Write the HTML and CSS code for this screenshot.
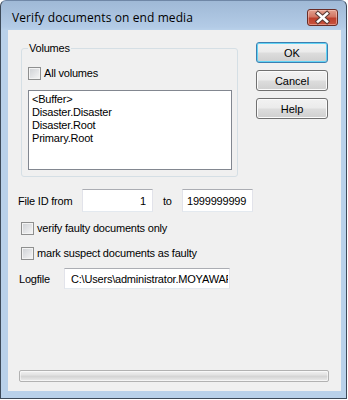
FILE: index.html
```html
<!DOCTYPE html>
<html lang="en">
<head>
  <meta charset="UTF-8" />
  <title>Verify documents on end media</title>
  <link rel="stylesheet" href="styles.css">
</head>
<body>
  <div class="window">
    <div class="titlebar">
      <span class="title">Verify documents on end media</span>
      <span class="close">
        <svg width="31" height="17" viewBox="0 0 31 17">
          <path d="M11 4.5 L20 12.5 M20 4.5 L11 12.5" stroke="#5b3a36" stroke-width="4.6" stroke-linecap="square" />
          <path d="M11 4.5 L20 12.5 M20 4.5 L11 12.5" stroke="#ffffff" stroke-width="2.6" stroke-linecap="square" />
        </svg>
      </span>
    </div>
    <div class="client">
      <div class="top">
        <fieldset class="group">
          <legend>Volumes</legend>
          <label class="check-row"><span class="check"></span>All volumes</label>
          <ul class="listbox">
            <li>&lt;Buffer&gt;</li>
            <li>Disaster.Disaster</li>
            <li>Disaster.Root</li>
            <li>Primary.Root</li>
          </ul>
        </fieldset>
        <div class="buttons">
          <button class="btn default">OK</button>
          <button class="btn">Cancel</button>
          <button class="btn">Help</button>
        </div>
      </div>
      <div class="range-row">
        <span class="lbl-from">File ID from</span>
        <input class="field num" type="text" value="1">
        <span class="lbl-to">to</span>
        <input class="field" type="text" value="1999999999">
      </div>
      <label class="check-row opt first"><span class="check"></span>verify faulty documents only</label>
      <label class="check-row opt"><span class="check"></span>mark suspect documents as faulty</label>
      <div class="log-row">
        <span class="lbl-log">Logfile</span>
        <input class="field log" type="text" value="C:\Users\administrator.MOYAWARE\verify.log">
      </div>
      <div class="progress"></div>
    </div>
  </div>
</body>
</html>
```

FILE: styles.css
```css
:root {
  --frame: #b9d1ea;
  --face: #f0f0f0;
  --ui-font: 'Liberation Sans', Arial, sans-serif;
}
* { box-sizing: border-box; margin: 0; padding: 0; }
body {
  background: #ffffff;
  font-family: var(--ui-font);
  font-size: 11px;
  letter-spacing: -0.2px;
  color: #000;
}
.window {
  width: 347px;
  height: 399px;
  border: 1px solid #3d4a59;
  border-top-color: #6f87a6;
  border-radius: 6px 6px 0 0;
  background: linear-gradient(#9fb9d6 0, #b3cbe6 26px, var(--frame) 29px);
  padding: 0 5px 7px 7px;
  display: flex;
  flex-direction: column;
}
.titlebar {
  height: 29px;
  display: flex;
  align-items: flex-start;
  justify-content: space-between;
  padding-left: 4px;
}
.title {
  font-family: 'Open Sans', 'Noto Sans', sans-serif;
  font-size: 12px;
  letter-spacing: 0.1px;
  line-height: 16px;
  margin-top: 9px;
  color: #000;
}
.close {
  width: 31px;
  height: 17px;
  margin-top: 8px;
  margin-right: 3px;
  border: 1px solid #6a2d26;
  border-radius: 3px;
  background: linear-gradient(#e3a08f 0, #d27563 45%, #bd3f2c 55%, #c9543f 100%);
  box-shadow: inset 0 0 0 1px rgba(255,220,210,0.45);
  display: flex;
  align-items: center;
  justify-content: center;
}
.close svg { display: block; margin: -1px; }
.client {
  flex: 1;
  background: var(--face);
  padding: 12px 13px 0 10px;
  display: flex;
  flex-direction: column;
}
.top {
  display: flex;
  align-items: flex-start;
  gap: 18px;
}
.group {
  width: 217px;
  margin-left: 3px;
  border: 1px solid #d5dfe5;
  border-radius: 3px;
  padding: 12px 5px 6px 6px;
}
.group legend {
  padding: 0 1px;
  line-height: 13px;
}
.check-row {
  display: flex;
  align-items: center;
  gap: 3px;
  height: 13px;
  line-height: 13px;
}
.check {
  width: 13px;
  height: 13px;
  border: 1px solid #8e8f8f;
  background: linear-gradient(135deg, #cdd0d4 0, #e4e5e7 55%, #f7f7f7 100%);
  box-shadow: inset 0 0 0 1px #f3f3f3;
  flex: none;
}
.listbox {
  list-style: none;
  margin-top: 10px;
  width: 204px;
  height: 80px;
  border: 1px solid #828790;
  background: #fff;
  padding: 2px 3px;
}
.listbox li {
  line-height: 13px;
  white-space: nowrap;
}
.buttons {
  display: flex;
  flex-direction: column;
  gap: 7px;
}
.btn {
  width: 72px;
  height: 21px;
  font-family: var(--ui-font);
  font-size: 11px;
  color: #000;
  border: 1px solid #707070;
  border-radius: 3px;
  background: linear-gradient(#f2f2f2 0, #ebebeb 48%, #dddddd 52%, #cfcfcf 100%);
  box-shadow: inset 0 0 0 1px #fbfbfb;
}
.btn.default {
  border-color: #3c7fb1;
  box-shadow: inset 0 0 0 1px #62d4f5;
}
.range-row {
  display: flex;
  align-items: center;
  margin-top: 12px;
}
.lbl-from { width: 64px; }
.lbl-to { width: 29px; padding-left: 10px; }
.field {
  height: 23px;
  width: 71px;
  font-family: var(--ui-font);
  font-size: 11px;
  letter-spacing: -0.2px;
  color: #000;
  background: #fff;
  border: 1px solid #e2e3ea;
  border-top-color: #abadb3;
  border-bottom-color: #e3e9ef;
  padding: 0 1px 0 4px;
  outline: none;
}
.field.num {
  text-align: right;
  padding-right: 6px;
}
.opt { margin-left: 3px; }
.opt.first { margin-top: 10px; }
.opt + .opt { margin-top: 12px; }
.log-row {
  display: flex;
  align-items: center;
  margin-top: 8px;
}
.lbl-log { width: 46px; padding-left: 1px; }
.field.log {
  width: 166px;
  height: 21px;
  padding-left: 6px;
}
.progress {
  margin-top: 81px;
  margin-left: 1px;
  width: 310px;
  height: 12px;
  border: 1px solid #b2b2b2;
  border-radius: 2px;
  background: linear-gradient(#f2f2f2 0, #e4e4e4 35%, #d5d5d5 55%, #e2e2e2 80%, #ececec 100%);
  box-shadow: inset 0 0 0 1px rgba(255,255,255,0.5);
}
```
